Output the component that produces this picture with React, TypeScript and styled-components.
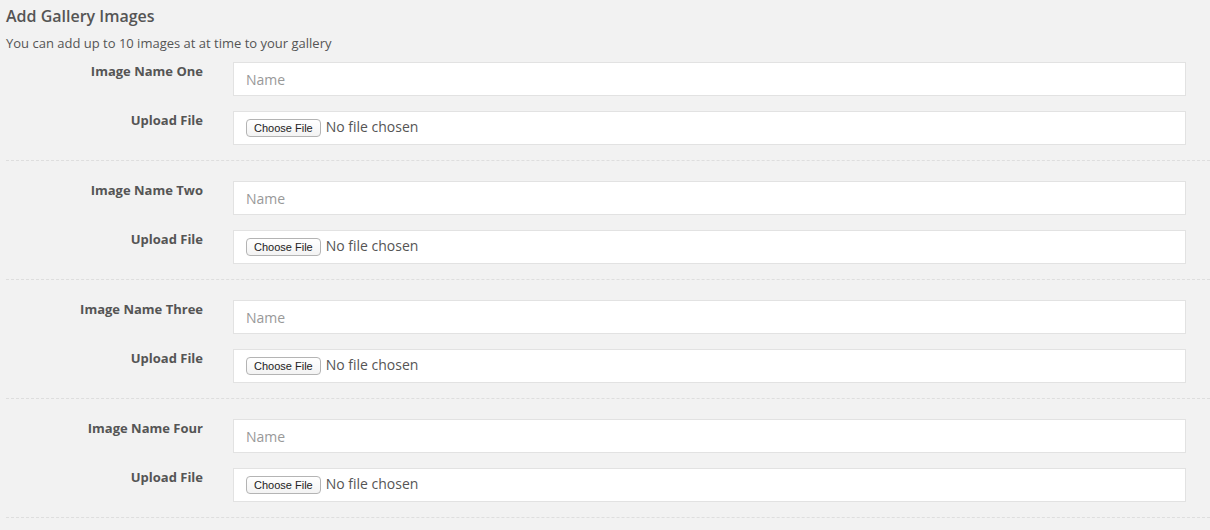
import styled, { createGlobalStyle } from "styled-components";

const GlobalStyle = createGlobalStyle`
  html, body {
    margin: 0;
    padding: 0;
    background: #f2f2f2;
    font-family: "Open Sans", "Liberation Sans", Arial, sans-serif;
    color: #555;
  }
`;

const Page = styled.div`
  padding: 4px 0 0 6px;
`;

const Title = styled.h2`
  margin: 0;
  font-size: 16px;
  font-weight: 600;
  line-height: 24px;
  color: #555;
`;

const Intro = styled.p`
  margin: 6px 0 0;
  font-size: 13px;
  line-height: 18px;
  color: #555;
`;

const Group = styled.div<{ $first?: boolean }>`
  display: flex;
  flex-direction: column;
  gap: 15px;
  padding: ${(p) => (p.$first ? "10px" : "20px")} 0 15px;
  border-bottom: 1px dashed #dedede;
`;

const Row = styled.div`
  display: grid;
  grid-template-columns: 197px 1fr;
  column-gap: 30px;
  padding-right: 24px;
`;

const Label = styled.label`
  text-align: right;
  font-size: 13px;
  font-weight: 700;
  line-height: 18px;
  color: #555;
`;

const Field = styled.div`
  height: 32px;
  background: #fff;
  border: 1px solid #e2e2e2;
  display: flex;
  align-items: center;
  padding: 0 12px;
`;

const TextInput = styled.input`
  border: none;
  outline: none;
  background: transparent;
  width: 100%;
  font-family: "Open Sans", "Liberation Sans", Arial, sans-serif;
  font-size: 14px;
  color: #555;
  padding: 0;
  &::placeholder {
    color: #999;
  }
`;

const FileButton = styled.button`
  font-family: "Liberation Sans", Arial, sans-serif;
  font-size: 11px;
  line-height: 14px;
  color: #222;
  background: linear-gradient(#ffffff, #f3f3f3);
  border: 1px solid #b4b4b4;
  border-radius: 4px;
  padding: 1px 7px;
  margin-right: 5px;
`;

const FileStatus = styled.span`
  font-size: 14px;
  color: #555;
  margin-top: -4px;
`;

const names = ["One", "Two", "Three", "Four"];

export default function App() {
  return (
    <>
      <GlobalStyle />
      <Page>
        <Title>Add Gallery Images</Title>
        <Intro>You can add up to 10 images at at time to your gallery</Intro>
        {names.map((n, i) => (
          <Group key={n} $first={i === 0}>
            <Row>
              <Label>Image Name {n}</Label>
              <Field>
                <TextInput placeholder="Name" />
              </Field>
            </Row>
            <Row>
              <Label>Upload File</Label>
              <Field>
                <FileButton type="button">Choose File</FileButton>
                <FileStatus>No file chosen</FileStatus>
              </Field>
            </Row>
          </Group>
        ))}
      </Page>
    </>
  );
}
